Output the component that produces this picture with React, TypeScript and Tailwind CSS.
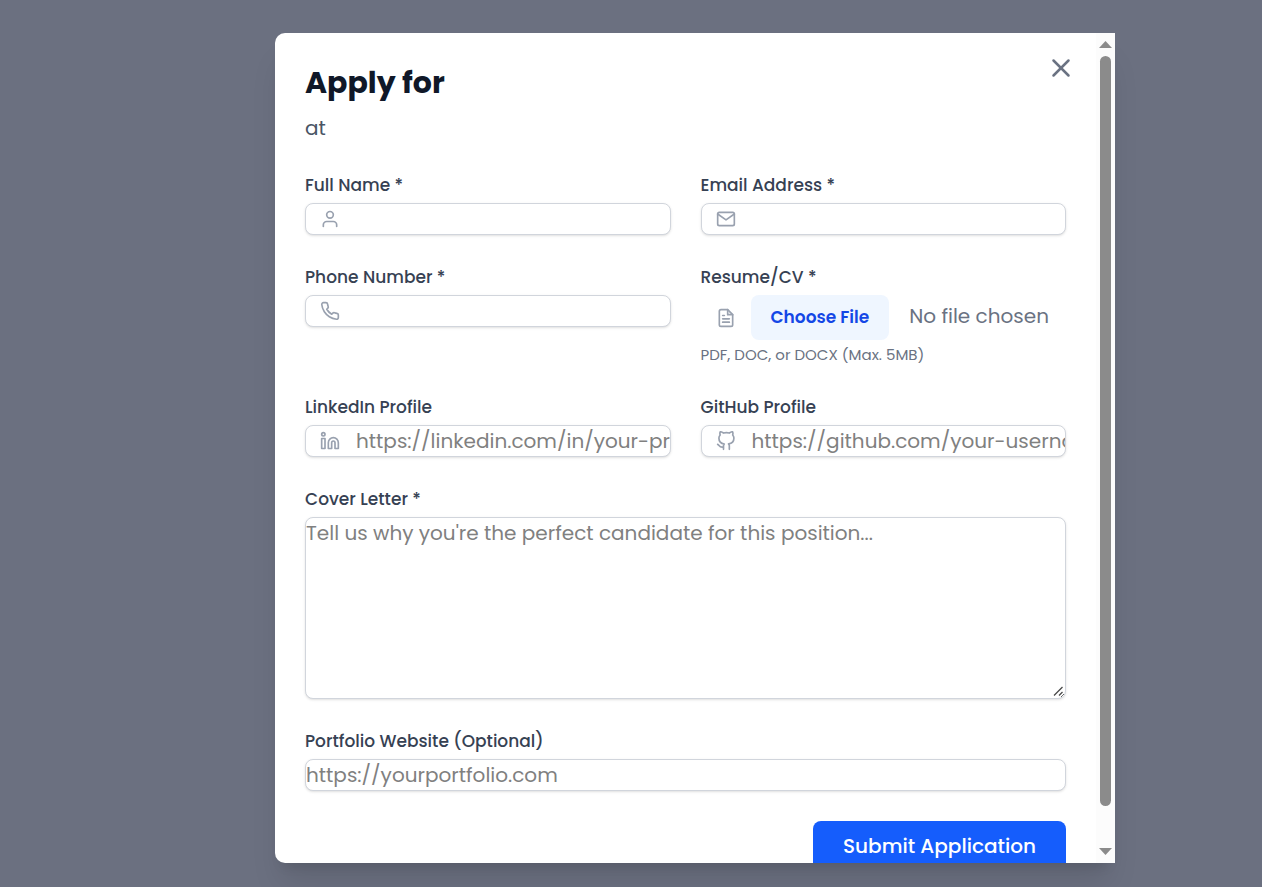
import type { ReactNode } from 'react';
import { FiFileText, FiGithub, FiLinkedin, FiMail, FiPhone, FiUser, FiX } from 'react-icons/fi';
import type { IconType } from 'react-icons';

const FIELD =
  'block w-full rounded-lg border border-[#d1d5dc] bg-white text-xl leading-[30px] text-gray-900 shadow-sm placeholder:text-[#808080] focus:outline-2 focus:outline-blue-500';

function Label({ id, children }: { id: string; children: ReactNode }) {
  return (
    <label htmlFor={id} className="mb-[5px] block text-[17px] leading-[25px] font-medium text-[#364153]">
      {children}
    </label>
  );
}

function FieldIcon({ icon: Icon }: { icon: IconType }) {
  return (
    <span className="pointer-events-none absolute inset-y-0 left-0 flex items-center pl-[15px] text-[#99a1af]">
      <Icon size={20} />
    </span>
  );
}

interface IconFieldProps {
  id: string;
  label: string;
  icon: IconType;
  type: string;
  placeholder?: string;
  required?: boolean;
}

function IconField({ id, label, icon, type, placeholder, required }: IconFieldProps) {
  return (
    <div className="min-w-0">
      <Label id={id}>{label}</Label>
      <div className="relative">
        <FieldIcon icon={icon} />
        <input id={id} name={id} type={type} placeholder={placeholder} required={required} className={`${FIELD} pl-[50px]`} />
      </div>
    </div>
  );
}

function ResumeField() {
  return (
    <div className="min-w-0">
      <Label id="resume">Resume/CV *</Label>
      <div className="relative">
        <FieldIcon icon={FiFileText} />
        <input
          id="resume"
          name="resume"
          type="file"
          accept=".pdf,.doc,.docx"
          required
          className="block w-full pl-[50px] text-xl leading-[30px] text-[#6a7282] file:mr-5 file:rounded-lg file:border-0 file:bg-[#eff6ff] file:px-5 file:py-2.5 file:text-[17px] file:leading-[25px] file:font-semibold file:text-[#1447e6]"
        />
      </div>
      <p className="mt-[5px] text-[15px] leading-5 text-[#6a7282]">PDF, DOC, or DOCX (Max. 5MB)</p>
    </div>
  );
}

function ScrollTrack() {
  return (
    <div aria-hidden="true" className="flex w-[19px] shrink-0 flex-col items-center bg-[#fcfcfc] py-2">
      <svg width="13" height="7" viewBox="0 0 13 7" className="shrink-0 fill-[#8b8b8b]">
        <path d="M6.5 0 13 7H0z" />
      </svg>
      <div className="mt-2 w-full min-h-0 flex-1 px-1 pb-[42px]">
        <div className="h-full rounded-full bg-[#8b8b8b]" />
      </div>
      <svg width="13" height="7" viewBox="0 0 13 7" className="shrink-0 fill-[#8b8b8b]">
        <path d="M0 0h13L6.5 7z" />
      </svg>
    </div>
  );
}

export default function App() {
  return (
    <div className="flex h-screen justify-center bg-[#6b7080] pt-[33px] pb-6 pl-32 font-[Poppins,Inter,sans-serif]">
      <div
        role="dialog"
        aria-modal="true"
        aria-labelledby="dialog-title"
        className="flex w-full max-w-[840px] overflow-hidden rounded-l-[10px] bg-white shadow-[0_25px_31px_-6px_rgb(0_0_0/0.1),0_10px_12px_-7px_rgb(0_0_0/0.1)]"
      >
        <div className="relative min-w-0 flex-1 overflow-y-auto p-[30px] [scrollbar-width:none]">
          <button type="button" aria-label="Close" className="absolute top-5 right-5 text-[#6a7282]">
            <FiX size={30} />
          </button>
          <h2 id="dialog-title" className="text-3xl leading-10 font-bold text-[#101828]">
            Apply for
          </h2>
          <p className="mt-2.5 text-xl leading-[30px] text-[#4a5565]">at</p>

          <form className="mt-[30px] flex flex-col gap-[30px]">
            <div className="grid grid-cols-2 gap-[30px]">
              <IconField id="name" label="Full Name *" icon={FiUser} type="text" required />
              <IconField id="email" label="Email Address *" icon={FiMail} type="email" required />
              <IconField id="phone" label="Phone Number *" icon={FiPhone} type="tel" required />
              <ResumeField />
              <IconField id="linkedin" label="LinkedIn Profile" icon={FiLinkedin} type="url" placeholder="https://linkedin.com/in/your-profile" />
              <IconField id="github" label="GitHub Profile" icon={FiGithub} type="url" placeholder="https://github.com/your-username" />
            </div>
            <div>
              <Label id="cover">Cover Letter *</Label>
              <div className="relative">
                <textarea
                  id="cover"
                  name="cover"
                  rows={6}
                  required
                  placeholder="Tell us why you're the perfect candidate for this position..."
                  className={FIELD}
                />
                <svg
                  aria-hidden="true"
                  width="12"
                  height="12"
                  viewBox="0 0 12 12"
                  className="pointer-events-none absolute right-0.5 bottom-0.5 rounded-br-md bg-white stroke-[#4a4a4a]"
                >
                  <path d="M2 10.500 10.500 2M7 10.500 10.500 7" strokeWidth="1.3" fill="none" />
                </svg>
              </div>
            </div>
            <div>
              <Label id="portfolio">Portfolio Website (Optional)</Label>
              <input id="portfolio" name="portfolio" type="url" placeholder="https://yourportfolio.com" className={FIELD} />
            </div>
            <div className="flex justify-end">
              <button type="submit" className="rounded-lg bg-[#155dfc] px-[30px] py-2.5 text-xl leading-[30px] font-medium text-white">
                Submit Application
              </button>
            </div>
          </form>
        </div>
        <ScrollTrack />
      </div>
    </div>
  );
}
